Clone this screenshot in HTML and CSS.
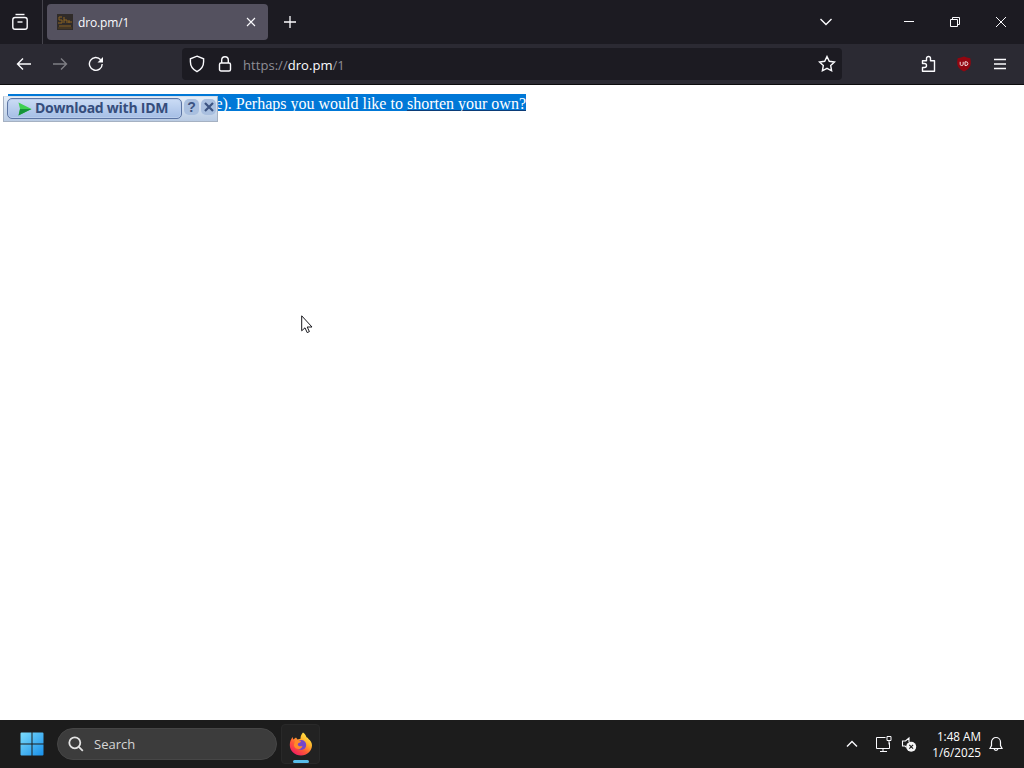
FILE: index.html
```html
<!DOCTYPE html>
<html lang="en">
<head>
    <meta charset="UTF-8">
    <title>dro.pm/1</title>
    <link rel="stylesheet" href="styles.css">
</head>
<body>
    <!-- Tabs -->
    <header class="tab-bar">
        <div class="firefox-view">
            <svg width="18" height="18" viewBox="0 0 18 18"><path d="M4.5 1.5h9"/><rect x="1.8" y="4.5" width="14.4" height="11.7" rx="2.2"/><path d="M6.5 9h5"/></svg>
        </div>
        <div class="tab">
            <svg class="favicon" width="16" height="16" viewBox="0 0 16 16"><rect width="16" height="16" fill="#302b29" stroke="none"/><path d="M5 3H2v3h3v3H1M7 3v6M7 6h3v3M11 8h4M2 12h12M12 6v3" stroke="#8c6522"/><path d="M1 14h14" stroke="#57411f"/></svg>
            <span class="tab-title">dro.pm/1</span>
            <svg class="tab-close" width="10" height="10" viewBox="0 0 10 10"><path d="M1 1l8 8M9 1l-8 8"/></svg>
        </div>
        <svg class="new-tab" width="14" height="14" viewBox="0 0 14 14"><path d="M7 1v12M1 7h12"/></svg>
        <svg class="all-tabs" width="14" height="10" viewBox="0 0 14 10"><path d="M1.5 2L7 7.5 12.5 2"/></svg>
        <div class="window-buttons">
            <svg width="12" height="12" viewBox="0 0 12 12"><path d="M1 5.5h10"/></svg>
            <svg width="12" height="12" viewBox="0 0 12 12"><path d="M1.5 3.5h7v7h-7zM3.5 3.5v-2h7v7h-2"/></svg>
            <svg width="12" height="12" viewBox="0 0 12 12"><path d="M1 1l10 10M11 1L1 11"/></svg>
        </div>
    </header>

    <!-- Address bar -->
    <nav class="nav-bar">
        <div class="nav-buttons">
            <svg width="16" height="16" viewBox="0 0 16 16"><path d="M15 8H1.5M7 2.5L1.5 8 7 13.5"/></svg>
            <svg class="disabled" width="16" height="16" viewBox="0 0 16 16"><path d="M1 8h13.5M9 2.5L14.5 8 9 13.5"/></svg>
            <svg width="16" height="16" viewBox="0 0 16 16"><path d="M14.2 8A6.4 6.4 0 1 1 12.7 3.8"/><path d="M15 1v5.5H9.5z" fill="#fbfbfe" stroke="none"/></svg>
        </div>
        <div class="url-bar">
            <svg width="16" height="18" viewBox="0 0 16 18"><path d="M8 1.2l6.6 2.6v3c0 4.5-2.4 7.8-6.6 9.8C3.8 14.6 1.4 11.3 1.4 6.8v-3z"/></svg>
            <svg width="14" height="18" viewBox="0 0 14 18"><rect x="1.5" y="8" width="11" height="8" rx="1.5"/><path d="M3.7 8V5a3.3 3.3 0 0 1 6.6 0v3"/></svg>
            <span class="url">https://<b>dro.pm</b>/1</span>
            <svg class="star" width="18" height="18" viewBox="0 0 18 18"><path d="M9 1.5l2.3 4.8 5.2.7-3.8 3.6.9 5.2L9 13.3l-4.6 2.5.9-5.2L1.5 7l5.2-.7z"/></svg>
        </div>
        <div class="toolbar">
            <svg width="16" height="18" viewBox="0 0 16 18"><path d="M2.5 16.3V12.5H4.5a2 2 0 0 0 0-4H2.5V5.8h4V3.5a2 2 0 0 1 4 0v2.3h4v10.5z" stroke-linejoin="round"/></svg>
            <svg width="16" height="16" viewBox="0 0 16 16"><path d="M8 .5c2 .8 4 1.200 6.300 1.700.8 4 .9 7-1.300 9.800-1.300 1.600-3 2.600-5 3.500-2-.9-3.700-1.900-5-3.500C.8 9.200.9 6.200 1.700 2.200 4 1.700 6 1.300 8 .5z" fill="#930610" stroke="none"/><path d="M4.200 5.800v2.500q0 1.200 1.500 1.200t1.500-1.200V5.800M9 5.800v3.700h1q1.900 0 1.900-1.850T10 5.800z" stroke="#f3dada" stroke-width="1"/></svg>
            <svg width="14" height="12" viewBox="0 0 14 12"><path d="M1 1.500h12M1 6h12M1 10.500h12"/></svg>
        </div>
    </nav>

    <!-- Page content -->
    <main class="page">
        <p class="message">e). Perhaps you would like to <a>shorten your own?</a></p>
        <div class="idm">
            <div class="idm-button">
                <svg width="14" height="14" viewBox="0 0 14 14"><path d="M.5.5L13.5 7 .5 13.5 2 7z" fill="#3fd052"/><path d="M2 7h11.5L.5 13.5z" fill="#159439"/></svg>
                <span>Download with IDM</span>
            </div>
            <span class="idm-small">?</span>
            <span class="idm-small"><svg width="10" height="10" viewBox="0 0 10 10"><path d="M1 1l8 8M9 1L1 9" stroke="#3c5482" stroke-width="2.2"/></svg></span>
        </div>
        <svg class="cursor" width="13" height="20" viewBox="0 0 13 20"><path d="M.7.8v15l3.300-3 2.200 4.800 2.200-1-2.200-4.600h4.800z" fill="#fff" stroke="#17171c"/></svg>
    </main>

    <!-- Taskbar -->
    <footer class="taskbar">
        <svg class="start" width="24" height="24" viewBox="0 0 24 24">
            <defs>
                <linearGradient id="win" x1="0" y1="0" x2="24" y2="24" gradientUnits="userSpaceOnUse"><stop offset="0" stop-color="#7eddfb"/><stop offset="1" stop-color="#168eea"/></linearGradient>
            </defs>
            <path d="M.5 1.5q0-1 1-1h10v11H.5zM12.5.5h10q1 0 1 1v10h-11zM.5 12.5h11v11h-10q-1 0-1-1zM12.5 12.5h11v10q0 1-1 1h-10z" fill="url(#win)"/>
        </svg>
        <div class="search">
            <svg width="16" height="16" viewBox="0 0 16 16"><circle cx="6.8" cy="6.8" r="5.5"/><path d="M10.8 10.8l4 4"/></svg>
            <span>Search</span>
        </div>
        <div class="task">
            <svg width="24" height="24" viewBox="0 0 24 24">
                <defs>
                    <linearGradient id="fox" x1="20" y1="2" x2="5" y2="22" gradientUnits="userSpaceOnUse"><stop offset="0" stop-color="#fff04a"/><stop offset=".35" stop-color="#ffb02c"/><stop offset=".65" stop-color="#ff5b35"/><stop offset="1" stop-color="#f31c62"/></linearGradient>
                </defs>
                <path d="M14 .5c2 1.400 3 3 3.500 4.800 1 .2 1.700 1 2 1.700 2 1.200 3.500 3.800 3.500 6.200C23 19 18 23.500 12 23.500S.8 19 .8 13c0-3 1-5.500 2.700-8l.8 2.500L7 5.500l1.500 2 3-.8C11.500 4 12.500 2 14 .5z" fill="url(#fox)"/>
                <circle cx="12.2" cy="13" r="5" fill="#7446cc"/>
                <path d="M6 9c2-1.500 4.500-1 6 .5-.3 1.500-3 1.200-3.200 2.700 0 2 2.500 2.600 4.700 1.500-1 4.800-7.500 4.300-8.700-.5z" fill="#ff8a28"/>
            </svg>
            <span class="indicator"></span>
        </div>
        <div class="tray">
            <svg class="chevron" width="12" height="8" viewBox="0 0 12 8"><path d="M1 6.5l5-5 5 5"/></svg>
            <svg class="network" width="17" height="18" viewBox="0 0 17 18"><path d="M10.5 2.5h-9v11h13v-6M5 16.5h7M8 13.5v3M12 1.5h4v4h-4zM14 5.5v4"/></svg>
            <svg class="volume" width="16" height="16" viewBox="0 0 16 16"><path d="M8 6V2L4.500 5H1.500v5H4l1.500 1.300"/><circle cx="10.2" cy="10.8" r="5" fill="#f4f4f4" stroke="none"/><path d="M8.300 8.900l3.800 3.800M12.100 8.900l-3.800 3.800" stroke="#1c1c1c"/></svg>
            <div class="clock">
                <div>1:48 AM</div>
                <div>1/6/2025</div>
            </div>
            <svg class="bell" width="14" height="16" viewBox="0 0 14 16"><path d="M7 1.500A4.500 4.500 0 0 0 2.500 6v3.500L1 12.500h12l-1.500-3V6A4.500 4.500 0 0 0 7 1.500zM5 12.500c.3 2.500 3.700 2.500 4 0"/></svg>
        </div>
    </footer>
</body>
</html>
```

FILE: styles.css
```css
* {
    box-sizing: border-box;
}
body {
    margin: 0;
    height: 768px;
    display: flex;
    flex-direction: column;
    overflow: hidden;
    background-color: #fff;
    font-family: "Open Sans", "Noto Sans", sans-serif;
}
svg {
    display: block;
    flex: none;
    fill: none;
    stroke: #fbfbfe;
    stroke-width: 1.4;
}

/* Tabs */
.tab-bar {
    height: 44px;
    display: flex;
    align-items: center;
    background-color: #1c1b22;
}
.firefox-view {
    width: 43px;
    height: 44px;
    padding: 13px 0 0 11px;
    border-right: 1px solid #45444c;
}
.tab {
    width: 221px;
    height: 36px;
    margin-left: 4px;
    padding: 0 12px 0 10px;
    display: flex;
    align-items: center;
    border-radius: 4px;
    background-color: #54515f;
}
.favicon {
    stroke-width: 1;
}
.tab-title {
    flex: 1;
    margin-left: 5px;
    color: #fbfbfe;
    font-size: 12px;
    letter-spacing: -0.15px;
}
.tab-close {
    stroke-width: 1.1;
}
.new-tab {
    margin-left: 15px;
    stroke-width: 1.3;
}
.all-tabs {
    margin-left: auto;
}
.window-buttons {
    margin: 0 17px 0 70px;
    display: flex;
    gap: 34px;
}
.window-buttons svg {
    stroke-width: 1;
}

/* Address bar */
.nav-bar {
    height: 41px;
    padding: 0 17px 0 16px;
    display: flex;
    align-items: center;
    background-color: #2b2a33;
    border-bottom: 1px solid #0c0c0d;
}
.nav-buttons {
    display: flex;
    gap: 20px;
}
.nav-buttons .disabled {
    opacity: 0.4;
}
.url-bar {
    width: 660px;
    height: 32px;
    margin-left: 78px;
    padding: 0 6px 0 7px;
    display: flex;
    align-items: center;
    border-radius: 4px;
    background-color: #1c1b22;
}
.url-bar svg + svg {
    margin-left: 13px;
}
.url {
    margin-left: 11px;
    padding-top: 1px;
    color: #8f8e96;
    font-size: 13px;
    letter-spacing: 0.05px;
}
.url b {
    color: #fbfbfe;
    font-weight: normal;
}
.url-bar .star {
    margin-left: auto;
}
.toolbar {
    margin-left: auto;
    display: flex;
    align-items: center;
    gap: 20px;
}
.toolbar svg:last-child {
    margin-left: 1px;
}

/* Page content */
.page {
    flex: 1;
    position: relative;
    padding: 9px 8px;
}
.message {
    width: 518px;
    height: 17px;
    margin: 0;
    background-color: #0078d7;
    color: #fff;
    font-family: "Liberation Serif", serif;
    font-size: 16px;
    line-height: 19px;
    text-align: right;
    white-space: nowrap;
}
.message a {
    text-decoration: underline;
    text-decoration-color: #0b3c78;
    text-decoration-skip-ink: none;
    text-underline-offset: 1px;
}
.idm {
    position: absolute;
    top: 11px;
    left: 3px;
    width: 215px;
    height: 26px;
    padding: 1px 1px 3px 3px;
    display: flex;
    align-items: flex-start;
    gap: 2px;
    background: linear-gradient(#e4edf8, #b9cbe3);
    border: 1px solid #a5b1c2;
    border-top-color: #d5dfeb;
}
.idm-button {
    width: 175px;
    height: 21px;
    padding-left: 10px;
    display: flex;
    flex: none;
    align-items: center;
    gap: 3px;
    border: 1px solid #5c75a4;
    border-radius: 5px;
    box-shadow: inset 0 0 0 1px #b9cdec;
    background: linear-gradient(#cbdcf5, #a5bee5);
    color: #354d7c;
    white-space: nowrap;
}
.idm-button span {
    padding-bottom: 2px;
    font-family: "Open Sans", "DejaVu Sans", sans-serif;
    font-size: 14px;
    font-weight: bold;
    letter-spacing: -0.25px;
}
.idm-button svg {
    stroke: none;
}
.idm-small {
    width: 15px;
    height: 16px;
    margin-top: 1px;
    display: flex;
    align-items: center;
    justify-content: center;
    border-radius: 5px;
    background-color: #a9bfdf;
    color: #3c5482;
    font: bold 14px "Liberation Sans", sans-serif;
}
.cursor {
    position: absolute;
    top: 230px;
    left: 301px;
    stroke-width: 1;
}

/* Taskbar */
.taskbar {
    height: 48px;
    padding: 0 21px 0 20px;
    display: flex;
    align-items: center;
    background-color: #1c1c1c;
}
.start {
    stroke: none;
}
.search {
    width: 220px;
    height: 32px;
    margin-left: 13px;
    padding-left: 10px;
    display: flex;
    align-items: center;
    gap: 10px;
    border: 1px solid #464646;
    border-radius: 16px;
    background-color: #3c3c3c;
    color: #d6d6d6;
    font-size: 13px;
}
.search svg {
    stroke: #e4e4e4;
    stroke-width: 1.8;
}
.task {
    width: 39px;
    height: 40px;
    margin-left: 4px;
    padding-top: 7px;
    display: flex;
    flex-direction: column;
    align-items: center;
    border: 1px solid #292929;
    border-radius: 4px;
    background-color: #222;
}
.task svg {
    stroke: none;
}
.indicator {
    width: 16px;
    height: 3px;
    flex: none;
    margin-top: 4px;
    border-radius: 2px;
    background-color: #57bdea;
}
.tray {
    margin-left: auto;
    display: flex;
    align-items: center;
}
.network {
    margin-left: 17px;
    stroke-width: 1;
}
.volume {
    margin-left: 9px;
    stroke-width: 1.1;
}
.clock {
    width: 64px;
    color: #fff;
    font-size: 11.7px;
    line-height: 16px;
    text-align: right;
}
.bell {
    margin-left: 8px;
    stroke-width: 1.2;
}
```
